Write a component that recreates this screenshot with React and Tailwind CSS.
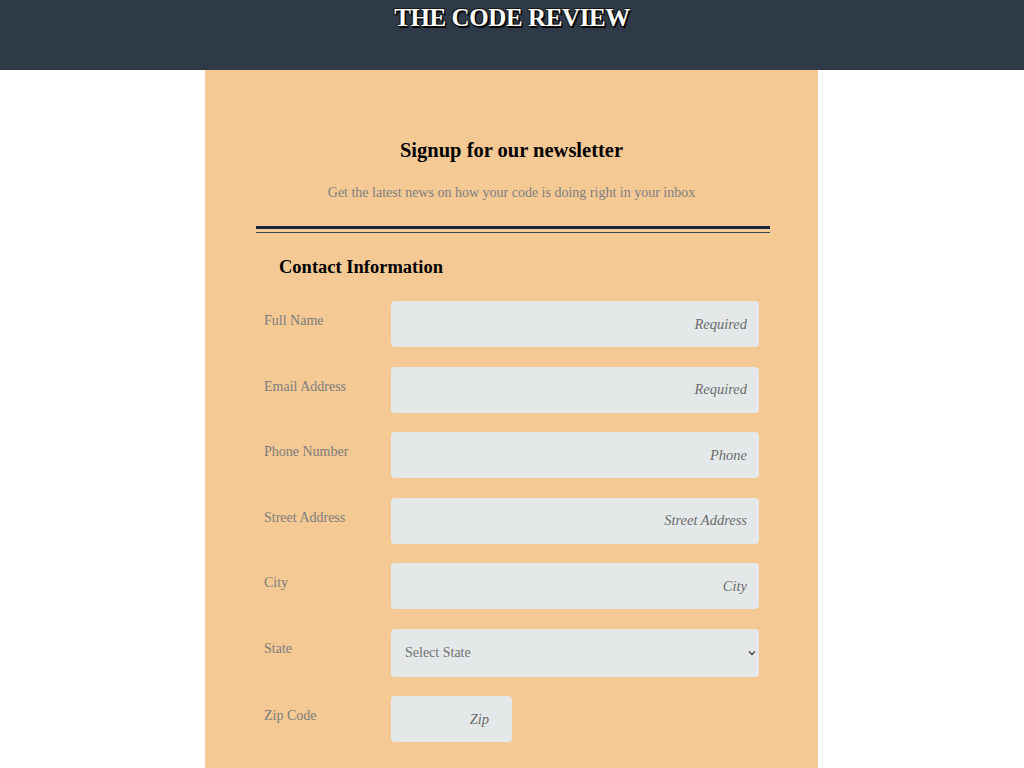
import React from "react";

const serif = { fontFamily: '"Liberation Serif", "DejaVu Serif", serif' };

function Row({ label, placeholder, className = "" }) {
  return (
    <div className="flex items-start">
      <label className="w-[135px] pl-[8px] pt-[10px] text-[14px] text-[#7d7d7d] leading-5">{label}</label>
      <input
        placeholder={placeholder}
        className={`h-[46px] rounded-[4px] bg-[#e5e8e9] pl-3 text-right italic text-[14.5px] text-[#555] placeholder:text-[#6b6b6b] outline-none ${className}`}
        style={serif}
      />
    </div>
  );
}

export default function App() {
  return (
    <div className="min-h-[768px] bg-white" style={serif}>
      <header className="h-[70px] bg-[#2f3a48] flex justify-center">
        <h1 className="text-white font-bold text-[25px] tracking-[-0.4px] leading-none pt-[5px] [text-shadow:1.5px_1.5px_0_#000,-1px_-1px_0_#1a1a1a,1px_-1px_0_#1a1a1a,-1px_1px_0_#1a1a1a]">
          THE CODE REVIEW
        </h1>
      </header>
      <main className="w-[613px] bg-[#f4c994] pb-12 ml-[205px]">
        <div className="pt-[66px] text-center">
          <h2 className="text-[20.5px] font-bold text-black leading-7">Signup for our newsletter</h2>
          <p className="mt-[18px] text-[14px] text-[#808080]">Get the latest news on how your code is doing right in your inbox</p>
        </div>
        <div className="mr-[48px] ml-[51px] mt-[23px]">
          <div className="h-[3px] bg-[#17263d]" />
          <div className="mt-[3px] h-px bg-[#3b4656]" />
        </div>
        <div className="ml-[51px]">
          <h3 className="mt-[18px] pl-[23px] text-[18.5px] font-bold text-black leading-8">Contact Information</h3>
          <div className="mt-[18px] flex flex-col gap-[19.5px]">
            <Row label="Full Name" placeholder="Required" className="w-[368px] pr-[12px]" />
            <Row label="Email Address" placeholder="Required" className="w-[368px] pr-[12px]" />
            <Row label="Phone Number" placeholder="Phone" className="w-[368px] pr-[12px]" />
            <Row label="Street Address" placeholder="Street Address" className="w-[368px] pr-[12px]" />
            <Row label="City" placeholder="City" className="w-[368px] pr-[12px]" />
            <div className="flex items-start">
              <label className="w-[135px] pl-[8px] pt-[10px] text-[14px] text-[#7d7d7d] leading-5">State</label>
              <div className="relative w-[368px] h-[48px] rounded-[4px] bg-[#e5e8e9] flex items-center pl-[14px] text-[14px] text-[#707070]">
                Select State
                <svg className="absolute right-[3px] top-1/2 -translate-y-1/2" width="8" height="6" viewBox="0 0 8 6">
                  <path d="M1 1.5 L4 4.5 L7 1.5" fill="none" stroke="#444" strokeWidth="1.3" />
                </svg>
              </div>
            </div>
            <Row label="Zip Code" placeholder="Zip" className="w-[121px] pr-[23px]" />
          </div>
        </div>
      </main>
    </div>
  );
}
